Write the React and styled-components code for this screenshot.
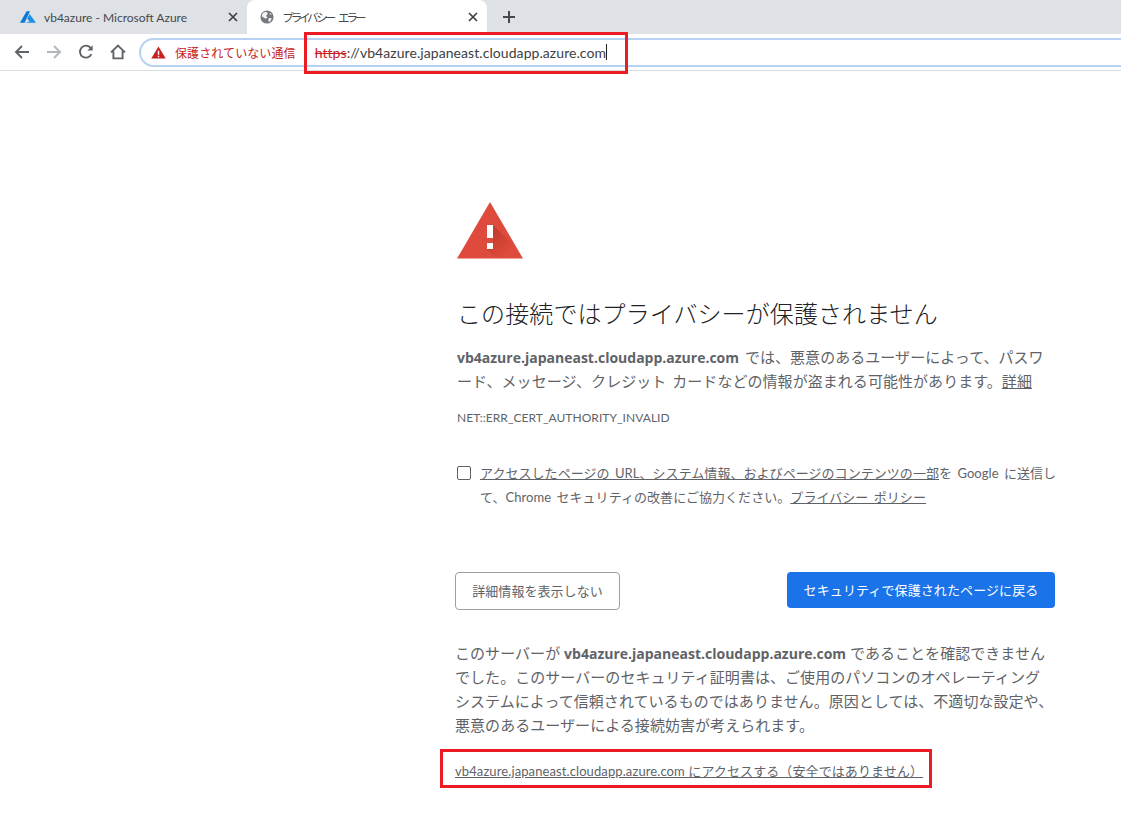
import React from "react";
import styled, { createGlobalStyle } from "styled-components";

const GlobalStyle = createGlobalStyle`
  html, body {
    margin: 0;
    padding: 0;
    background: #fff;
    overflow: hidden;
  }
  body {
    font-family: "Lato", "Noto Sans CJK JP", sans-serif;
  }
`;

const SANS = `"Lato", "Noto Sans CJK JP", sans-serif`;

export default function App() {
  return (
    <Page>
      <GlobalStyle />
      <TabStrip>
        <Tab>
          <AzureLogo viewBox="0 0 16 12">
            <path d="M6.6 0.2 L10 0.2 L4.6 11.8 L0 11.8 L3.6 5.6 Z" fill="#0a78d4" />
            <path d="M9.6 3 L16 11.8 L5.2 11.8 L9.6 10.6 L7.2 7.4 Z" fill="#1a8fe3" />
          </AzureLogo>
          <TabTitle>vb4azure - Microsoft Azure</TabTitle>
          <CloseIcon />
        </Tab>
        <ActiveTab>
          <GlobeIcon />
          <TabTitle $narrow>プライバシー エラー</TabTitle>
          <CloseIcon />
        </ActiveTab>
        <NewTab viewBox="0 0 14 14">
          <path d="M7 1 V13 M1 7 H13" stroke="#45494e" strokeWidth="2" fill="none" />
        </NewTab>
      </TabStrip>

      <Toolbar>
        <NavIcon viewBox="0 0 16 16" color="#5f6368">
          <path d="M15 8 H2.5 M8 2 L2 8 L8 14" />
        </NavIcon>
        <NavIcon viewBox="0 0 16 16" color="#b4b7ba">
          <path d="M1 8 H13.5 M8 2 L14 8 L8 14" />
        </NavIcon>
        <NavIcon viewBox="0 0 16 16" color="#5f6368">
          <path d="M13.4 10.2 A6 6 0 1 1 12.4 3.6 L14 5.2" />
          <path d="M14.6 1.2 V6.4 H9.4 Z" fill="#5f6368" stroke="none" />
        </NavIcon>
        <NavIcon viewBox="0 0 16 16" color="#5f6368">
          <path d="M1 8.4 L8 1.6 L15 8.4 M3.4 7 V14.4 H12.6 V7" />
        </NavIcon>
        <Omnibox>
          <WarnIcon viewBox="0 0 16 14">
            <path d="M8 0.5 L15.8 13.5 H0.2 Z" fill="#c5221f" />
            <path d="M7.2 5 H8.8 V9.4 H7.2 Z M7.2 10.4 H8.8 V12 H7.2 Z" fill="#fff" />
          </WarnIcon>
          <SecurityText>保護されていない通信</SecurityText>
          <Url>
            <Scheme>https</Scheme>://vb4azure.japaneast.cloudapp.azure.com
          </Url>
          <Caret />
        </Omnibox>
      </Toolbar>

      <Content>
        <ErrorIcon viewBox="0 0 66 57">
          <defs>
            <linearGradient id="errShade" gradientUnits="userSpaceOnUse" x1="34" y1="34" x2="50" y2="50">
              <stop offset="0" stopColor="#a52a20" stopOpacity="0.45" />
              <stop offset="1" stopColor="#a52a20" stopOpacity="0" />
            </linearGradient>
          </defs>
          <path d="M33 0 L66 56.6 H0 Z" fill="#de4a3c" />
          <path d="M36 23 L61 48 L66 56.6 H39.5 L30 47 H36 Z" fill="url(#errShade)" />
          <path d="M30 23 H36 V36 H30 Z M30 41 H36 V47 H30 Z" fill="#fff" />
        </ErrorIcon>
        <Heading>この接続ではプライバシーが保護されません</Heading>
        <Body>
          <strong>vb4azure.japaneast.cloudapp.azure.com</strong> では、悪意のあるユーザーによって、パスワ
          <br />
          ード、メッセージ、クレジット カードなどの情報が盗まれる可能性があります。<DetailLink>詳細</DetailLink>
        </Body>
        <ErrorCode>NET::ERR_CERT_AUTHORITY_INVALID</ErrorCode>
        <OptIn>
          <Checkbox />
          <OptInText>
            <u>アクセスしたページの URL、システム情報、およびページのコンテンツの一部</u>を Google に送信し
            <br />
            て、Chrome セキュリティの改善にご協力ください。<u>プライバシー ポリシー</u>
          </OptInText>
        </OptIn>
        <Buttons>
          <OutlineButton>詳細情報を表示しない</OutlineButton>
          <PrimaryButton>セキュリティで保護されたページに戻る</PrimaryButton>
        </Buttons>
        <Details>
          このサーバーが <strong>vb4azure.japaneast.cloudapp.azure.com</strong> であることを確認できません
          <br />
          でした。このサーバーのセキュリティ証明書は、ご使用のパソコンのオペレーティング
          <br />
          システムによって信頼されているものではありません。原因としては、不適切な設定や、
          <br />
          悪意のあるユーザーによる接続妨害が考えられます。
        </Details>
        <ProceedLink>vb4azure.japaneast.cloudapp.azure.com にアクセスする（安全ではありません）</ProceedLink>
      </Content>

      <UrlMark />
      <LinkMark />
    </Page>
  );
}

const CloseIcon = () => (
  <CloseSvg viewBox="0 0 10 10">
    <path d="M1 1 L9 9 M9 1 L1 9" stroke="#3c4043" strokeWidth="1.7" fill="none" />
  </CloseSvg>
);

const GlobeIcon = () => (
  <GlobeSvg viewBox="0 0 16 16">
    <circle cx="8" cy="8" r="7.5" fill="#75797d" />
    <path d="M3 3.5 L7 2 L9 4 L7 6.5 L8.5 8.5 L6.5 10 L5 9 L2 7 Z M10 9 L13.5 9.5 L11.5 13.5 L9.5 13 Z M11 2.8 L13.4 5 L11.5 5.5 Z" fill="#f1f3f4" />
  </GlobeSvg>
);

const Page = styled.div`
  position: relative;
  width: 1121px;
  height: 814px;
  overflow: hidden;
  background: #fff;
  font-family: ${SANS};
`;

const TabStrip = styled.div`
  display: flex;
  align-items: flex-end;
  height: 34px;
  padding-left: 8px;
  background: #dee1e6;
`;

const Tab = styled.div`
  display: flex;
  align-items: center;
  box-sizing: border-box;
  width: 239px;
  height: 34px;
  padding: 0 9px 0 12px;
`;

const ActiveTab = styled(Tab)`
  width: 240px;
  background: #fff;
  border-radius: 8px 8px 0 0;
`;

const AzureLogo = styled.svg`
  width: 16px;
  height: 12px;
  margin-right: 8px;
  flex: none;
`;

const GlobeSvg = styled.svg`
  width: 14px;
  height: 14px;
  margin: 0 9px 0 1px;
  flex: none;
`;

const TabTitle = styled.span`
  flex: 1;
  font-size: ${(p) => (p.$narrow ? "11.5px" : "12px")};
  color: #45494e;
  white-space: nowrap;
  font-feature-settings: ${(p) => (p.$narrow ? '"palt"' : "normal")};
  letter-spacing: ${(p) => (p.$narrow ? "-2px" : "0")};
  word-spacing: ${(p) => (p.$narrow ? "3px" : "0")};
`;

const CloseSvg = styled.svg`
  width: 10px;
  height: 10px;
  flex: none;
`;

const NewTab = styled.svg`
  width: 14px;
  height: 14px;
  margin: 0 0 10px 15px;
`;

const Toolbar = styled.div`
  display: flex;
  align-items: center;
  box-sizing: border-box;
  height: 37px;
  padding: 0 0 0 14px;
  background: #fff;
  border-bottom: 1px solid #dadce0;
`;

const NavIcon = styled.svg`
  width: 16px;
  height: 16px;
  margin-right: 16px;
  flex: none;
  fill: none;
  stroke: ${(p) => p.color};
  stroke-width: 1.9;
`;

const Omnibox = styled.div`
  display: flex;
  align-items: center;
  box-sizing: border-box;
  flex: 1;
  height: 29px;
  margin-left: -3px;
  margin-right: -10px;
  padding-left: 10px;
  border: 2px solid #b5d2f3;
  border-radius: 15px 0 0 15px;
`;

const WarnIcon = styled.svg`
  width: 15px;
  height: 13px;
  margin-right: 9px;
  flex: none;
`;

const SecurityText = styled.span`
  font-size: 12px;
  letter-spacing: 0.1px;
  color: #c5221f;
  white-space: nowrap;
  margin-right: 19px;
`;

const Url = styled.span`
  font-size: 14px;
  letter-spacing: 0.07px;
  color: #3c4043;
  white-space: nowrap;
`;

const Scheme = styled.span`
  color: #c5221f;
  text-decoration: line-through;
`;

const Caret = styled.span`
  width: 1px;
  height: 16px;
  background: #202124;
`;

const Content = styled.main`
  box-sizing: border-box;
  width: 602px;
  margin-left: 455px;
  padding-top: 131px;
  color: #5f6368;
  font-size: 15px;
  line-height: 24px;
  letter-spacing: 0.05px;
  word-spacing: 2px;

  strong {
    font-family: "Open Sans", "Noto Sans CJK JP", sans-serif;
    font-size: 14px;
    font-weight: 700;
    line-height: 1;
    letter-spacing: 0;
    word-spacing: 0;
  }
`;

const ErrorIcon = styled.svg`
  display: block;
  width: 66px;
  height: 57px;
  margin-left: 2px;
`;

const Heading = styled.h1`
  margin: 38px 0 0 2px;
  font-size: 24px;
  font-weight: 300;
  letter-spacing: 0.1px;
  line-height: 34px;
  color: #202124;
  white-space: nowrap;
`;

const Body = styled.p`
  margin: 14px 0 0 2px;
  white-space: nowrap;
`;

const DetailLink = styled.u`
  color: #5f6368;
`;

const ErrorCode = styled.div`
  margin: 13px 0 0 2px;
  font-size: 12px;
  line-height: 24px;
  word-spacing: 0;
`;

const OptIn = styled.div`
  display: flex;
  align-items: flex-start;
  margin: 31px 0 0 2px;
`;

const Checkbox = styled.span`
  box-sizing: border-box;
  width: 14px;
  height: 14px;
  margin: 5px 9px 0 0;
  border: 1px solid #5f6368;
  border-radius: 2px;
  flex: none;
`;

const OptInText = styled.div`
  font-size: 13px;
  line-height: 24px;
  white-space: nowrap;
`;

const Buttons = styled.div`
  display: flex;
  justify-content: space-between;
  align-items: flex-start;
  margin-top: 63px;
`;

const OutlineButton = styled.div`
  box-sizing: border-box;
  display: flex;
  align-items: center;
  justify-content: center;
  width: 165px;
  height: 38px;
  border: 1px solid #9aa0a6;
  border-radius: 4px;
  font-size: 13px;
  color: #5f6368;
`;

const PrimaryButton = styled.div`
  display: flex;
  align-items: center;
  justify-content: center;
  width: 268px;
  height: 36px;
  margin-right: 2px;
  border-radius: 4px;
  background: #1a73e8;
  font-size: 13px;
  letter-spacing: 0.1px;
  color: #fff;
`;

const Details = styled.p`
  margin: 31px 0 0;
  white-space: nowrap;
  word-spacing: 0;
`;

const ProceedLink = styled.u`
  display: block;
  margin-top: 22px;
  font-size: 13px;
  letter-spacing: 0.1px;
  word-spacing: 0;
  line-height: 24px;
  white-space: nowrap;
`;

const UrlMark = styled.div`
  position: absolute;
  left: 304px;
  top: 32px;
  width: 324px;
  height: 42px;
  box-sizing: border-box;
  border: 3px solid #ed1c24;
`;

const LinkMark = styled.div`
  position: absolute;
  left: 440px;
  top: 749px;
  width: 492px;
  height: 39px;
  box-sizing: border-box;
  border: 3px solid #ed1c24;
`;
